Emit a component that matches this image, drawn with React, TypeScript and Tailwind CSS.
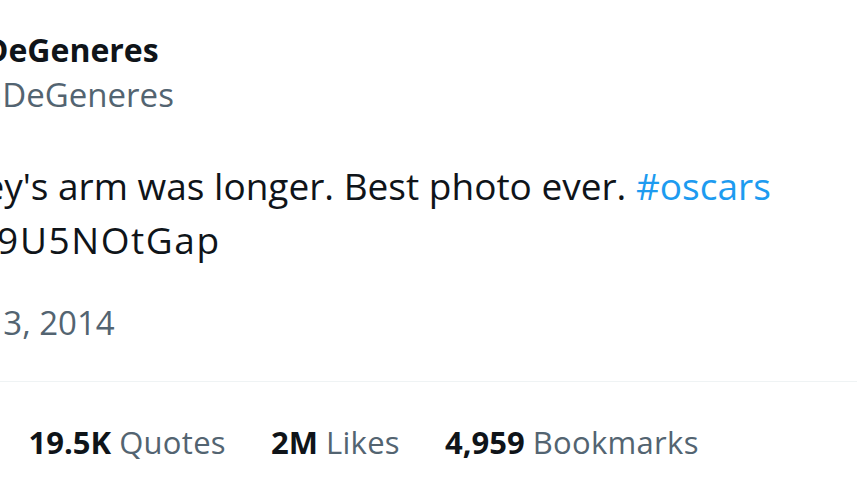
import React from 'react';

const stats = [
  { value: '3.1M', label: 'Reposts' },
  { value: '19.5K', label: 'Quotes' },
  { value: '2M', label: 'Likes' },
  { value: '4,959', label: 'Bookmarks' },
];

export default function App() {
  return (
    <div className="w-[857px] h-[482px] overflow-hidden bg-white font-['Open_Sans',sans-serif] text-[#0f1419]">
      <div className="ml-[-223px] w-[1300px]">
        {/* author */}
        <div className="flex items-center gap-[32px] pt-[27px]">
          <div className="w-[90px] h-[90px] rounded-full bg-gray-300 shrink-0" />
          <div className="flex flex-col whitespace-nowrap">
            <span className="text-[32px] leading-[45px] font-bold">Ellen DeGeneres</span>
            <span className="text-[33px] leading-[45px] text-[#536471]">@EllenDeGeneres</span>
          </div>
        </div>

        {/* tweet body */}
        <div className="mt-[42px] text-[37px] leading-[54px] whitespace-nowrap">
          <div>
            If only Bradley's arm was longer. Best photo ever.{' '}
            <span className="text-[#1d9bf0]">#oscars</span>
          </div>
          <div className="ml-[-9px] tracking-[1.6px]">http://t.co/C9U5NOtGap</div>
        </div>

        <div className="mt-[36px] pl-[7px] text-[33px] leading-[40px] text-[#536471] whitespace-nowrap">
          7:06 PM · Mar 3, 2014
        </div>

        <div className="mt-[38px] border-t border-[#eff3f4]" />

        <div className="mt-[40px] pl-[8px] flex gap-[45px] text-[31px] leading-[40px]">
          {stats.map((s) => (
            <span key={s.label} className="whitespace-nowrap">
              <span className="font-bold">{s.value}</span>{' '}
              <span className="text-[#536471] tracking-[0.3px]">{s.label}</span>
            </span>
          ))}
        </div>
      </div>
    </div>
  );
}
